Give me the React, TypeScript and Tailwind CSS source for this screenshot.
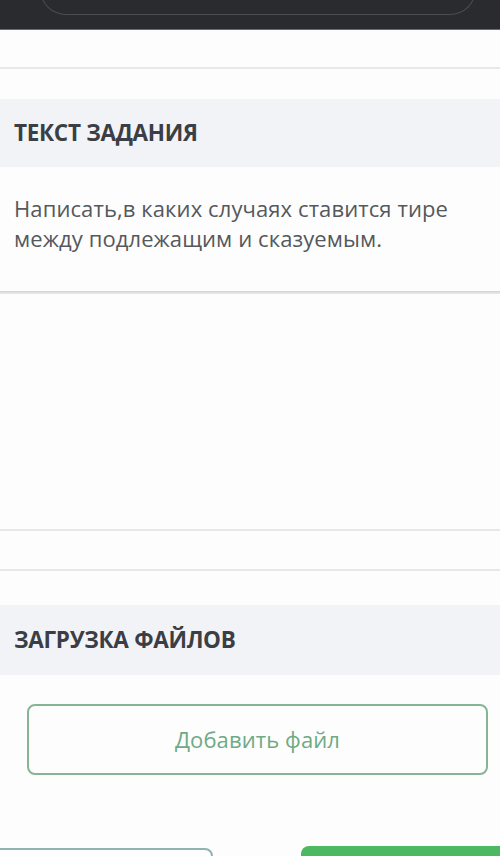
export default function App() {
  const font = { fontFamily: '"Open Sans", "Noto Sans", sans-serif' };
  return (
    <div className="w-[500px] h-[856px] overflow-hidden bg-[#fdfdfd] flex flex-col" style={font}>
      {/* top dark bar */}
      <div className="h-[30px] shrink-0 bg-[#2a2b2f] border-b border-[#6a6b6e] overflow-hidden flex flex-col">
        <div className="mt-[-30px] ml-[40px] mr-[24px] h-[45px] border-x border-b border-[#4b4c51] rounded-b-[26px] shrink-0" />
      </div>
      <div className="h-[39px] shrink-0 border-b-2 border-[#e8e8ea]" />
      <div className="h-[30px] shrink-0" />
      {/* section 1 header */}
      <div className="h-[68px] shrink-0 bg-[#f2f3f7] flex items-center px-[14px]">
        <span className="text-[22.5px] font-bold text-[#3b3e44] tracking-[-0.3px]">ТЕКСТ ЗАДАНИЯ</span>
      </div>
      <div className="h-[124px] shrink-0 px-[14px] pt-[26px] bg-[#fdfdfd]">
        <p className="text-[22px] leading-[30px] text-[#55585c] tracking-[0.1px]">
          Написать,в каких случаях ставится тире между подлежащим и сказуемым.
        </p>
      </div>
      <div className="h-[3px] shrink-0 bg-gradient-to-b from-[#d2d2d4] to-[#ececee]" />
      <div className="h-[235px] shrink-0" />
      <div className="h-[2px] shrink-0 bg-[#e8e8ea]" />
      <div className="h-[38px] shrink-0" />
      <div className="h-[2px] shrink-0 bg-[#e8e8ea]" />
      <div className="h-[34px] shrink-0" />
      {/* section 2 header */}
      <div className="h-[70px] shrink-0 bg-[#f2f3f7] flex items-center px-[14px]">
        <span className="text-[22.5px] font-bold text-[#3b3e44] tracking-[-0.3px]">ЗАГРУЗКА ФАЙЛОВ</span>
      </div>
      <div className="pt-[29px] pl-[27px] pr-[12px] shrink-0">
        <div className="h-[71px] border-2 border-[#86b596] rounded-[8px] flex items-center justify-center">
          <span className="text-[22px] text-[#6eaa85] tracking-[0.1px]">Добавить файл</span>
        </div>
      </div>
      <div className="mt-[71px] shrink-0 flex justify-between items-start">
        <div className="w-[213px] h-[20px] border-2 border-[#8fb3b3] border-l-0 rounded-tr-[8px] mt-[2px]" />
        <div className="w-[199px] h-[20px] bg-[#4cb962] rounded-tl-[8px]" />
      </div>
    </div>
  );
}
